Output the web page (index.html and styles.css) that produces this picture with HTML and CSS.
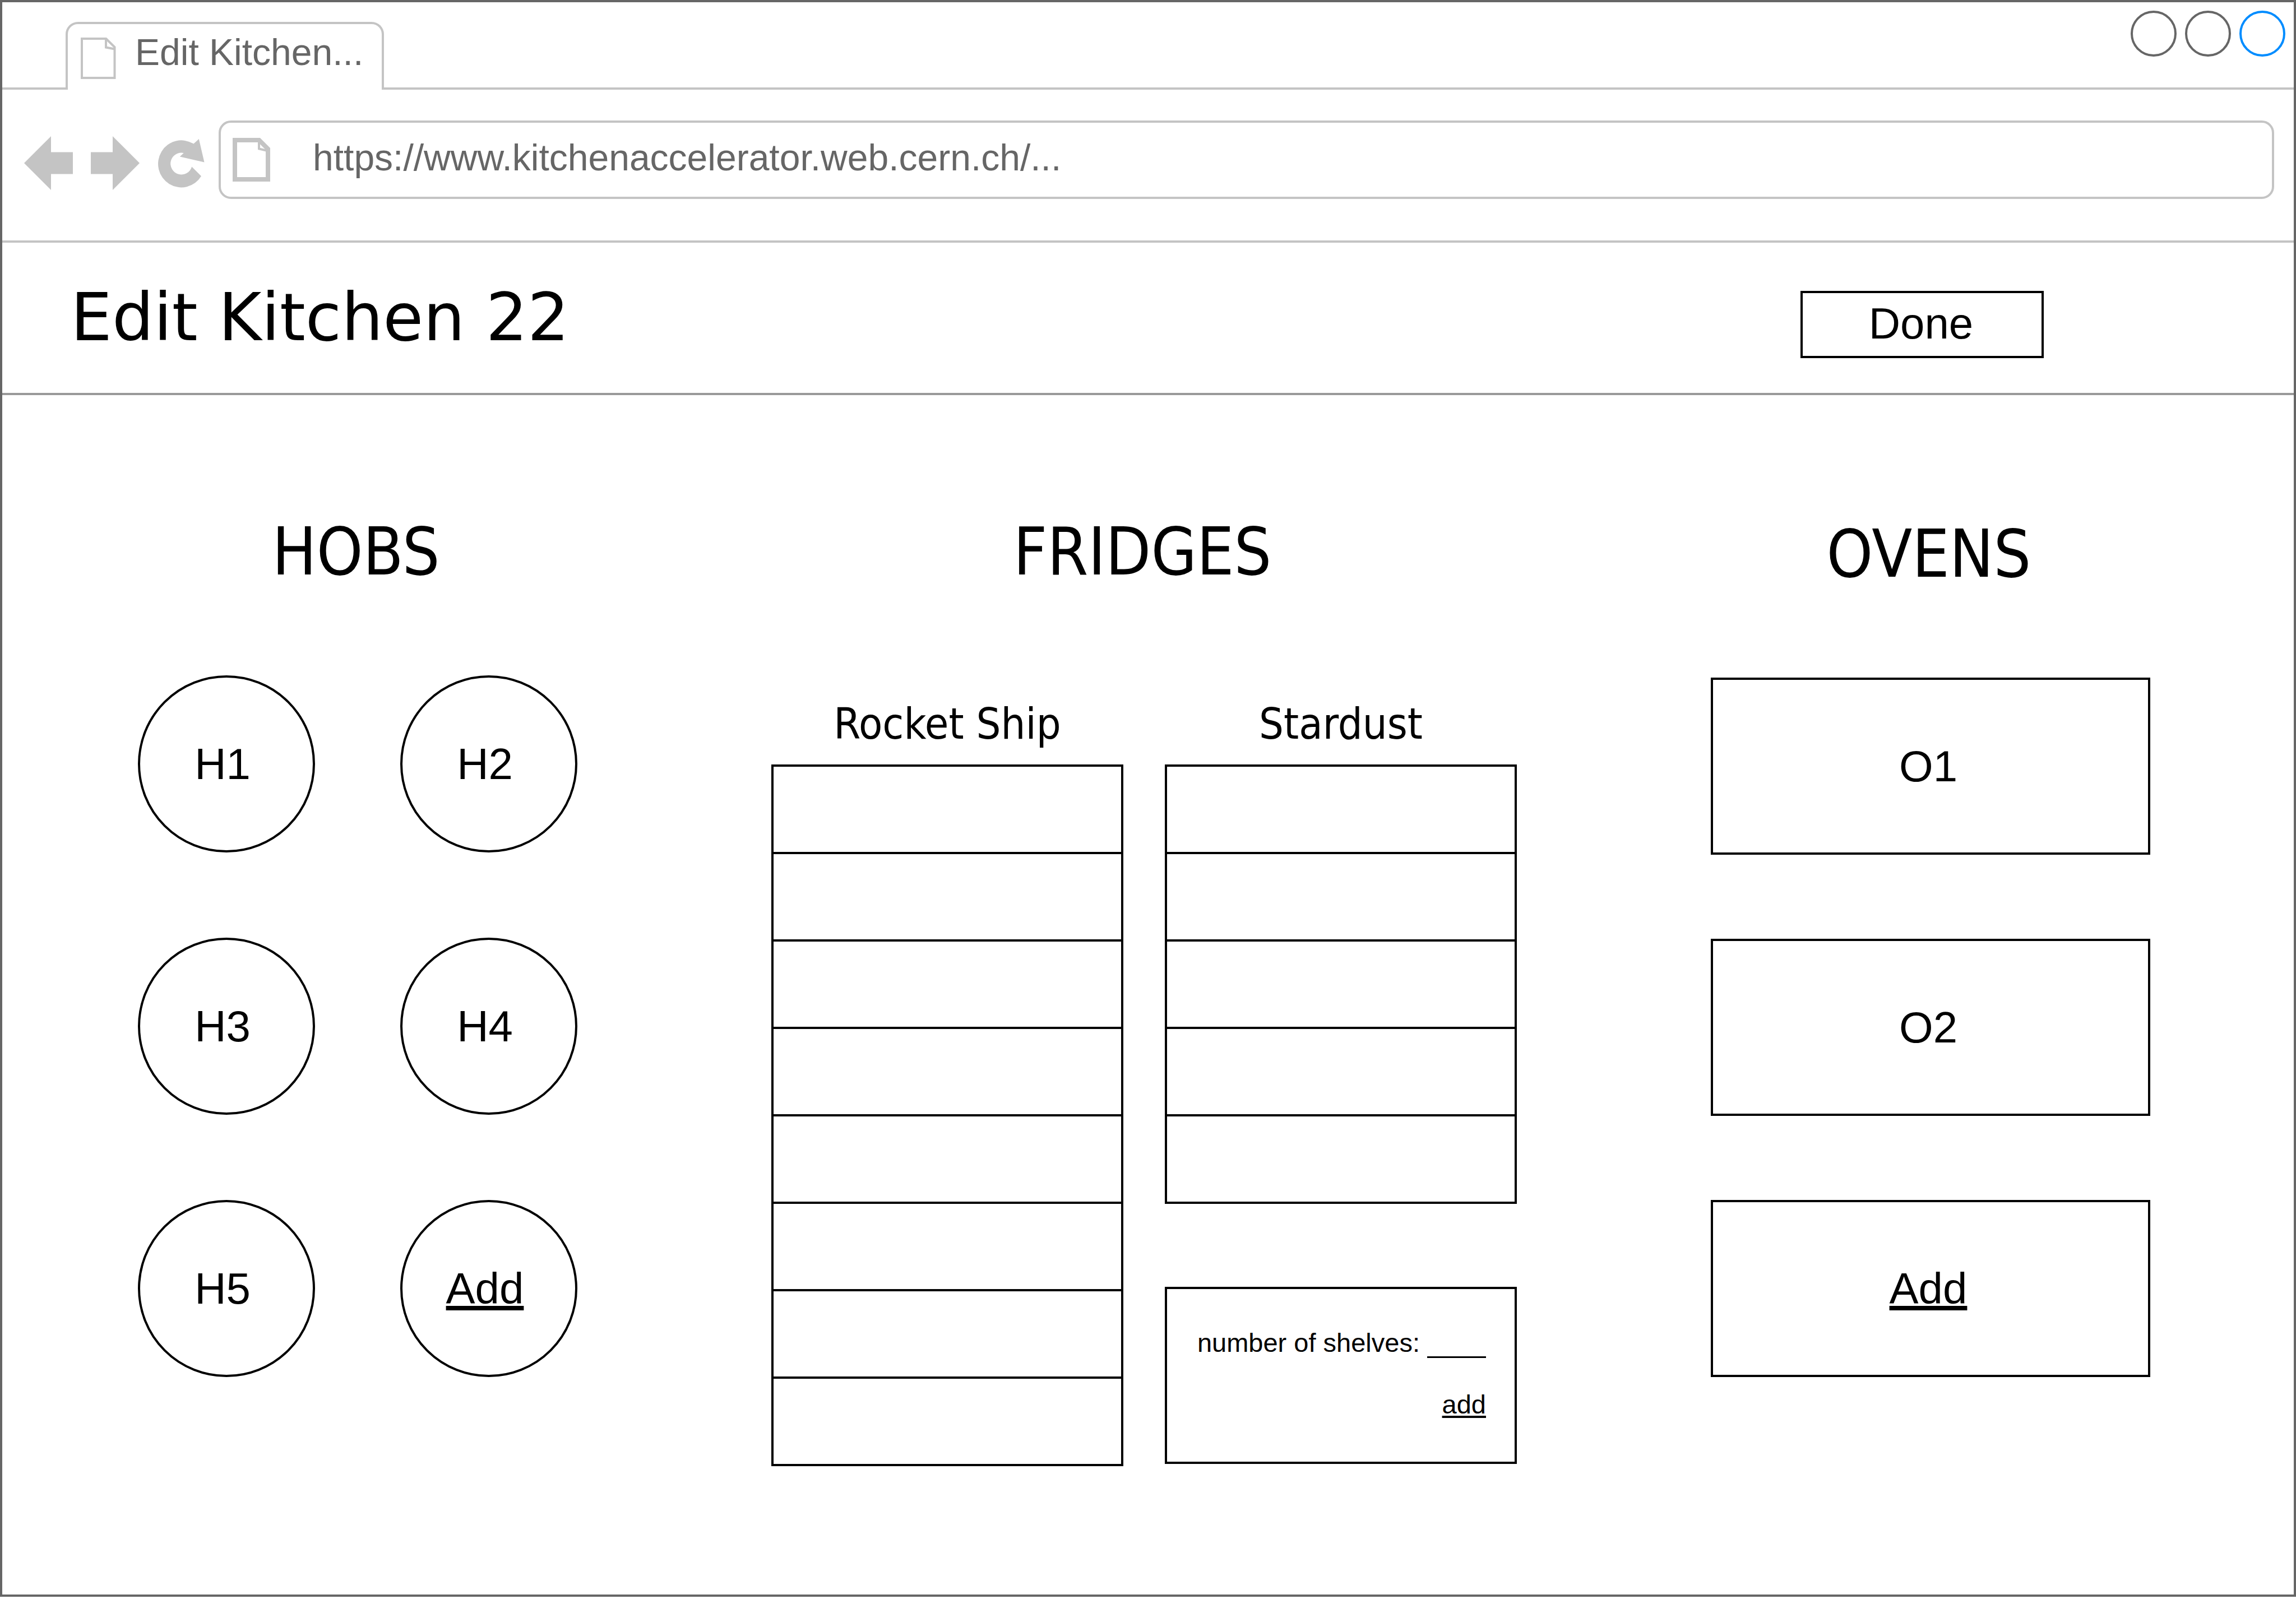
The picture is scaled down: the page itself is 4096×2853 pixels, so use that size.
FILE: index.html
```html
<!DOCTYPE html>
<html lang="en">
<head>
<meta charset="utf-8">
<title>Edit Kitchen 22</title>
<link rel="stylesheet" href="styles.css">
</head>
<body>
<div class="window">
  <div class="tab-strip">
    <div class="tab">
      <svg class="tab-icon" viewBox="0 0 63 74" aria-hidden="true"><path d="M2 2H45.200L60.500 17.200V72H2ZM45 2V17.500L60.500 20.500"/></svg>
      <span>Edit Kitchen...</span>
    </div>
    <div class="window-controls">
      <button class="dot" type="button" aria-label="Minimise"></button>
      <button class="dot" type="button" aria-label="Maximise"></button>
      <button class="dot dot-close" type="button" aria-label="Close"></button>
    </div>
  </div>
  <div class="toolbar">
    <div class="nav">
      <button class="nav-button" type="button" aria-label="Back"><svg width="87" height="96" viewBox="0 0 87 96"><path d="M0 48L48 0V28.500H87V67.500H48V96Z"/></svg></button>
      <button class="nav-button" type="button" aria-label="Forward"><svg width="87" height="96" viewBox="0 0 87 96"><path d="M87 48L39 0V28.500H0V67.500H39V96Z"/></svg></button>
      <button class="nav-button" type="button" aria-label="Reload"><svg width="84" height="96" viewBox="0 -5 84 96"><path d="M83.500 41.600L73.800 0L64.300 8.600A41.500 42 0 1 0 78 66.200L61.200 49.600A19.400 19.500 0 1 1 46.800 24.900L39.800 31.400Z"/></svg></button>
    </div>
    <div class="address">
      <svg class="address-icon" viewBox="0 0 67 78" aria-hidden="true"><path d="M4 4H47.300L63 19.600V74H4Z"/><path class="fold" d="M47 6V19.500L61 22.700"/></svg>
      <input class="address-input" type="text" aria-label="Address" value="https://www.kitchenaccelerator.web.cern.ch/...">
    </div>
  </div>
  <header class="page-header">
    <h1 class="page-title">Edit Kitchen 22</h1>
    <button class="done" type="button">Done</button>
  </header>
  <main class="kitchen">
    <section class="hobs">
      <h2 class="section-title">HOBS</h2>
      <div class="hob-grid">
        <button class="hob" type="button">H1</button>
        <button class="hob" type="button">H2</button>
        <button class="hob" type="button">H3</button>
        <button class="hob" type="button">H4</button>
        <button class="hob" type="button">H5</button>
        <a class="hob add-link" href="#add-hob">Add</a>
      </div>
    </section>
    <section class="fridges">
      <h2 class="section-title">FRIDGES</h2>
      <div class="fridge-grid">
        <div class="fridge-column">
          <h3 class="fridge-name">Rocket Ship</h3>
          <ul class="shelves"><li></li><li></li><li></li><li></li><li></li><li></li><li></li><li></li></ul>
        </div>
        <div class="fridge-column">
          <h3 class="fridge-name">Stardust</h3>
          <ul class="shelves"><li></li><li></li><li></li><li></li><li></li></ul>
          <form class="new-fridge">
            <div class="shelf-field">
              <label for="shelf-count">number of shelves:</label>
              <input id="shelf-count" class="shelf-input" type="text">
            </div>
            <a class="add-fridge" href="#add-fridge">add</a>
          </form>
        </div>
      </div>
    </section>
    <section class="ovens">
      <h2 class="section-title">OVENS</h2>
      <div class="oven-list">
        <button class="oven" type="button">O1</button>
        <button class="oven" type="button">O2</button>
        <a class="oven add-link" href="#add-oven">Add</a>
      </div>
    </section>
  </main>
</div>
</body>
</html>
```
FILE: styles.css
```css
* {
  box-sizing: border-box;
}

body {
  display: flex;
  flex-direction: column;
  min-height: 100vh;
  margin: 0;
  padding-bottom: 4px;
  background: #fff;
  color: #000;
  font-family: "Liberation Sans", Arial, sans-serif;
  font-size: 78px;
}

h1, h2, h3, ul {
  margin: 0;
  padding: 0;
  font-weight: 400;
}

button, input {
  margin: 0;
  padding: 0;
  border: 0;
  border-radius: 0;
  background: none;
  color: inherit;
  font: inherit;
}

.window {
  display: flex;
  flex: 1;
  flex-direction: column;
  border: 4px solid #666;
}

/* Tabs and window controls */
.tab-strip {
  display: flex;
  justify-content: space-between;
  align-items: flex-start;
  height: 156px;
  padding: 0 15px 0 113px;
  border-bottom: 4px solid #c4c4c4;
}

.tab {
  display: flex;
  align-items: center;
  gap: 34px;
  width: 568px;
  height: 121px;
  margin-top: 35px;
  padding: 0 0 18px 23px;
  border: 4px solid #c4c4c4;
  border-bottom: 0;
  border-radius: 22px 22px 0 0;
  background: #fff;
  color: #666;
  font-size: 66px;
  line-height: 76px;
}

.tab-icon {
  width: 63px;
  height: 74px;
  margin-top: 22px;
  fill: none;
  stroke: #c4c4c4;
  stroke-width: 4;
}

.window-controls {
  display: flex;
  gap: 15px;
  padding-top: 15px;
}

.dot {
  width: 82px;
  height: 82px;
  border: 4px solid #666;
  border-radius: 50%;
}

.dot-close {
  border-color: #008cff;
}

/* Navigation and address bar */
.toolbar {
  display: flex;
  align-items: center;
  gap: 25px;
  height: 273px;
  padding: 0 35px 20px 39px;
  border-bottom: 4px solid #c4c4c4;
}

.nav {
  display: flex;
  gap: 32px;
  padding-top: 12px;
}

.nav-button {
  display: flex;
  fill: #c4c4c4;
}

.address {
  display: flex;
  align-items: center;
  flex: 1;
  height: 140px;
  padding-left: 21px;
  border: 4px solid #c4c4c4;
  border-radius: 22px;
}

.address-icon {
  width: 67px;
  height: 78px;
  fill: none;
  stroke: #c4c4c4;
  stroke-width: 8;
}

.fold {
  stroke-width: 4;
}

.address-input {
  flex: 1;
  margin: 0 32px 8px 76px;
  color: #666;
  font-size: 66px;
}

/* Page header */
.page-header {
  display: flex;
  align-items: center;
  justify-content: space-between;
  height: 272px;
  padding: 0 446px 0 122px;
  border-bottom: 4px solid #999;
}

.page-title {
  font-family: "DejaVu Sans", Verdana, sans-serif;
  font-size: 117px;
  line-height: 136px;
}

.done {
  width: 434px;
  height: 120px;
  margin-top: 24px;
  padding: 0 4px 4px 0;
  border: 4px solid #000;
}

/* Kitchen contents */
.kitchen {
  display: flex;
  justify-content: space-between;
  padding: 212px 256px 0 242px;
}

.section-title,
.fridge-name {
  font-family: "DejaVu Sans Condensed", Tahoma, sans-serif;
  text-align: center;
}

.section-title {
  padding-right: 6px;
  font-size: 117px;
  line-height: 136px;
}

.hob-grid {
  display: grid;
  grid-template-columns: 316px 316px;
  gap: 152px;
  margin-top: 152px;
}

.hob,
.oven {
  display: flex;
  align-items: center;
  justify-content: center;
  height: 316px;
  border: 4px solid #000;
  color: #000;
}

.hob {
  padding-right: 14px;
  border-radius: 50%;
}

.oven {
  width: 784px;
  padding-right: 8px;
}

.oven-list {
  display: grid;
  gap: 150px;
  margin-top: 152px;
}

.ovens {
  padding-top: 4px;
}

.add-link {
  text-decoration: underline 8px;
  text-underline-offset: 4px;
}

.fridge-grid {
  display: grid;
  grid-template-columns: 628px 628px;
  gap: 74px;
  margin-top: 191px;
}

.fridge-name {
  font-size: 77px;
  line-height: 96px;
}

.shelves {
  margin-top: 24px;
  border: 4px solid #000;
  border-top: 0;
  list-style: none;
}

.shelves li {
  height: 156px;
  border-top: 4px solid #000;
}

.new-fridge {
  display: flex;
  flex-direction: column;
  align-items: flex-end;
  gap: 56px;
  height: 316px;
  margin-top: 148px;
  padding: 69px 51px 0 0;
  border: 4px solid #000;
  font-size: 47px;
  line-height: 54px;
}

.shelf-field {
  display: flex;
  gap: 13px;
}

.shelf-input {
  width: 105px;
  height: 54px;
  border-bottom: 3px solid #000;
}

.add-fridge {
  color: #000;
  text-decoration: underline 4px;
  text-underline-offset: 4px;
}
```
